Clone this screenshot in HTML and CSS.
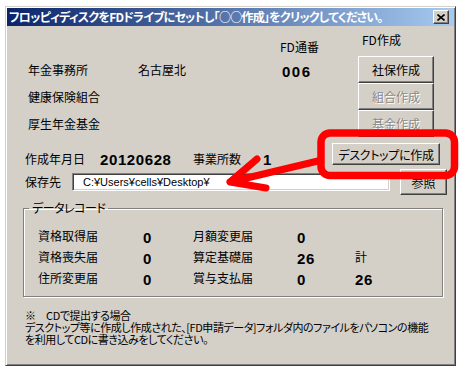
FILE: index.html
```html
<!DOCTYPE html>
<html lang="ja">
<head>
    <meta charset="UTF-8">
    <title>FD作成</title>
    <link rel="stylesheet" href="styles.css">
</head>
<body>
    <div class="window">
        <div class="titlebar">
            <span class="title">フロッピィディスクをFDドライブにセットし「○○作成」をクリックしてください。</span>
            <span class="close-btn">
                <svg width="8" height="7" viewBox="0 0 8 7"><path d="M0.5 0.5 L7.5 6.5 M7.5 0.5 L0.5 6.5" stroke="#000" stroke-width="1.6"/></svg>
            </span>
        </div>

        <div class="content">
            <div class="office-grid">
                <div></div>
                <div></div>
                <div class="fd-no">FD通番</div>
                <div class="fd-make">FD作成</div>

                <div class="label">年金事務所</div>
                <div class="label">名古屋北</div>
                <div class="num serial">006</div>
                <button class="btn">社保作成</button>

                <div class="label">健康保険組合</div>
                <div></div>
                <div></div>
                <button class="btn" disabled>組合作成</button>

                <div class="label">厚生年金基金</div>
                <div></div>
                <div></div>
                <button class="btn" disabled>基金作成</button>
            </div>

            <div class="info-row">
                <span class="info-label date-label">作成年月日</span>
                <span class="num date">20120628</span>
                <span class="info-label count-label">事業所数</span>
                <span class="num count">1</span>
                <button class="btn desktop-btn">デスクトップに作成</button>
            </div>

            <div class="path-row">
                <span class="path-label">保存先</span>
                <div class="path-input">C:¥Users¥cells¥Desktop¥</div>
                <button class="btn browse-btn">参照</button>
            </div>

            <fieldset class="records">
                <legend>データレコード</legend>
                <div class="record-grid">
                    <span>資格取得届</span><span class="num">0</span>
                    <span>月額変更届</span><span class="num">0</span>
                    <span></span>

                    <span>資格喪失届</span><span class="num">0</span>
                    <span>算定基礎届</span><span class="num">26</span>
                    <span>計</span>

                    <span>住所変更届</span><span class="num">0</span>
                    <span>賞与支払届</span><span class="num">0</span>
                    <span class="num">26</span>
                </div>
            </fieldset>

            <p class="note">※　CDで提出する場合<br>デスクトップ等に作成し作成された、[FD申請データ]フォルダ内のファイルをパソコンの機能<br>を利用してCDに書き込みをしてください。</p>
        </div>
    </div>

    <!-- 注釈（赤枠と矢印） -->
    <svg class="annotation" width="466" height="377" viewBox="0 0 466 377">
        <rect x="321" y="133" width="133.5" height="42.5" rx="9" fill="none" stroke="#f00" stroke-width="7.5"/>
        <path d="M318 161 L230 182 M257 159 L230 182 L266 188" fill="none" stroke="#f00" stroke-width="7" stroke-linecap="round" stroke-linejoin="round"/>
    </svg>
</body>
</html>
```

FILE: styles.css
```css
body {
    margin: 0;
    background: #fff;
    font-family: "Noto Sans CJK JP", sans-serif;
    font-size: 12px;
    color: #000;
    position: relative;
}
.window {
    box-sizing: border-box;
    width: 451px;
    height: 360px;
    margin: 6px 0 0 5px;
    padding: 1px;
    background: #d4d0c8;
    border: 1px solid;
    border-color: #d4d0c8 #404040 #404040 #d4d0c8;
    box-shadow: inset 1px 1px #fff, inset -1px -1px #808080;
}
.titlebar {
    display: flex;
    align-items: center;
    height: 18px;
    padding: 0 5px 0 2px;
    background: linear-gradient(to right, #0a246a, #a6caf0);
}
.title {
    flex: 1;
    color: #fff;
    font-weight: bold;
    line-height: 18px;
    letter-spacing: -0.75px;
    white-space: nowrap;
    font-feature-settings: "palt";
}
.close-btn {
    box-sizing: border-box;
    width: 16px;
    height: 14px;
    display: flex;
    align-items: center;
    justify-content: center;
    background: #d4d0c8;
    border: 1px solid;
    border-color: #fff #404040 #404040 #fff;
    box-shadow: inset -1px -1px #808080;
}
.content {
    padding: 4px 0 0 16px;
}
.office-grid {
    display: grid;
    grid-template-columns: 110px 144px 76px 76px;
    grid-template-rows: 26px 27px 27px 27px;
    margin-left: 5px;
    line-height: 12px;
}
.fd-no {
    align-self: end;
    padding-bottom: 3px;
    margin-left: -2px;
}
.fd-make {
    align-self: start;
    padding: 4px 0 0 4px;
}
.label {
    align-self: center;
}
.num {
    font-family: "Liberation Sans", Arial, sans-serif;
    font-weight: bold;
    font-size: 15px;
    letter-spacing: 0.6px;
    line-height: 15px;
}
.serial {
    align-self: center;
    letter-spacing: 1.5px;
    padding-top: 3px;
}
.btn {
    box-sizing: border-box;
    padding: 0;
    font-family: inherit;
    font-size: 12px;
    color: #000;
    background: #d4d0c8;
    border: 1px solid;
    border-color: #fff #404040 #404040 #fff;
    box-shadow: inset -1px -1px #808080;
    font-feature-settings: "palt";
}
.btn:disabled {
    color: #8a8a8a;
    text-shadow: 1px 1px #fff;
}
.info-row {
    display: flex;
    align-items: flex-end;
    height: 22px;
    margin-top: 6px;
    padding-left: 2px;
    line-height: 12px;
}
.date-label {
    width: 75px;
}
.date {
    width: 93px;
    margin-bottom: -2px;
}
.count-label {
    width: 70px;
}
.count {
    width: 69px;
    margin-bottom: -2px;
}
.desktop-btn {
    width: 108px;
    height: 22px;
    letter-spacing: -0.3px;
}
.path-row {
    display: flex;
    align-items: center;
    height: 26px;
    margin-top: 4px;
    padding-left: 2px;
    line-height: 12px;
}
.path-label {
    width: 47px;
}
.path-input {
    box-sizing: border-box;
    width: 318px;
    height: 18px;
    margin-right: 10px;
    padding-left: 10px;
    background: #fff;
    border: 1px solid;
    border-color: #808080 #fff #fff #808080;
    box-shadow: inset 1px 1px #404040, inset -1px -1px #d4d0c8;
    font-family: "Liberation Sans", Arial, sans-serif;
    font-size: 11px;
    line-height: 16px;
}
.browse-btn {
    width: 47px;
    height: 26px;
}
.records {
    box-sizing: border-box;
    width: 420px;
    margin: 7px 0 0 0;
    padding: 0 0 8px 5px;
    min-inline-size: 0;
    border: 1px solid #808080;
    box-shadow: inset 1px 1px #fff, 1px 1px #fff;
}
.records legend {
    padding: 0 3px;
    line-height: 12px;
    letter-spacing: -0.5px;
    font-feature-settings: "palt";
}
.record-grid {
    display: grid;
    grid-template-columns: 105px 50px 104px 58px 40px;
    grid-auto-rows: 21px;
    align-items: center;
    margin: 11px 0 0 9px;
    line-height: 12px;
}
.record-grid .num {
    padding-top: 3px;
}
.note {
    margin: 12px 0 0 2px;
    font-size: 11px;
    line-height: 12px;
    letter-spacing: -0.45px;
    white-space: nowrap;
    font-feature-settings: "palt";
}
.annotation {
    position: absolute;
    left: 0;
    top: 0;
    pointer-events: none;
}
```
